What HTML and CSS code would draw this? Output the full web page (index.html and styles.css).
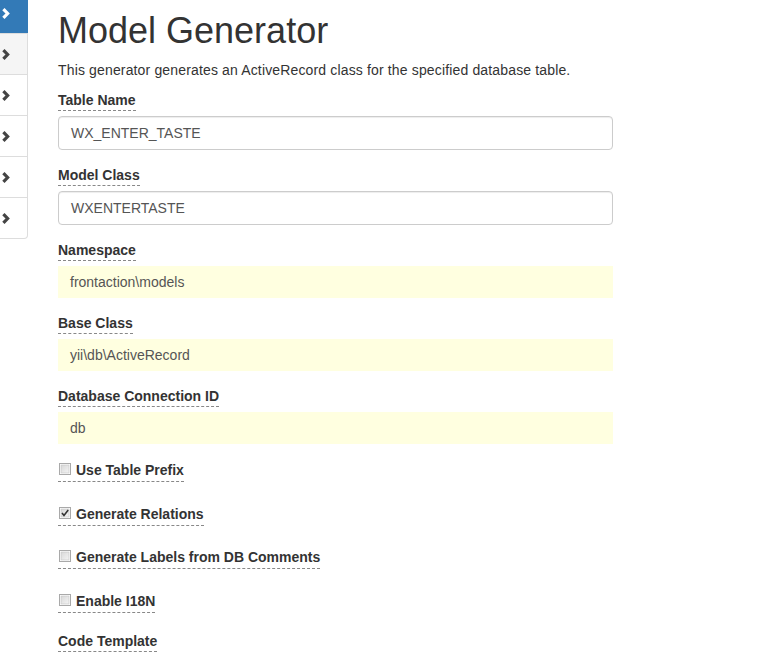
FILE: index.html
```html
<!DOCTYPE html>
<html>
<head>
<meta charset="utf-8">
<link rel="stylesheet" href="styles.css">
</head>
<body>
<div class="page">
  <nav class="sidebar">
    <div class="item active"><svg class="chev" width="9" height="11" viewBox="0 0 9 11"><path d="M1.4 1.2 L5.6 5.5 L1.4 9.8" /></svg></div>
    <div class="item hover"><svg class="chev" width="9" height="11" viewBox="0 0 9 11"><path d="M1.4 1.2 L5.6 5.5 L1.4 9.8" /></svg></div>
    <div class="item"><svg class="chev" width="9" height="11" viewBox="0 0 9 11"><path d="M1.4 1.2 L5.6 5.5 L1.4 9.8" /></svg></div>
    <div class="item"><svg class="chev" width="9" height="11" viewBox="0 0 9 11"><path d="M1.4 1.2 L5.6 5.5 L1.4 9.8" /></svg></div>
    <div class="item"><svg class="chev" width="9" height="11" viewBox="0 0 9 11"><path d="M1.4 1.2 L5.6 5.5 L1.4 9.8" /></svg></div>
    <div class="item last"><svg class="chev" width="9" height="11" viewBox="0 0 9 11"><path d="M1.4 1.2 L5.6 5.5 L1.4 9.8" /></svg></div>
  </nav>
  <main class="main">
    <h1 class="title">Model Generator</h1>
    <p class="desc">This generator generates an ActiveRecord class for the specified database table.</p>

    <div class="group">
      <label class="lbl">Table Name</label>
      <div class="input">WX_ENTER_TASTE</div>
    </div>
    <div class="group">
      <label class="lbl">Model Class</label>
      <div class="input">WXENTERTASTE</div>
    </div>
    <div class="group">
      <label class="lbl">Namespace</label>
      <div class="sticky">frontaction\models</div>
    </div>
    <div class="group">
      <label class="lbl">Base Class</label>
      <div class="sticky">yii\db\ActiveRecord</div>
    </div>
    <div class="group">
      <label class="lbl">Database Connection ID</label>
      <div class="sticky">db</div>
    </div>

    <div class="check-row">
      <label class="check-lbl"><svg class="cb" width="12" height="12" viewBox="0 0 12 12"><defs><linearGradient id="g1" x1="0" y1="0" x2="1" y2="1"><stop offset="0" stop-color="#d8d8d8"/><stop offset="1" stop-color="#f4f4f4"/></linearGradient></defs><rect x="0.5" y="0.5" width="11" height="11" fill="#fff" stroke="#a9a9a9"/><rect x="2" y="2" width="8" height="8" fill="url(#g1)" stroke="#c4c4c4" stroke-width="0.6"/></svg>Use Table Prefix</label>
    </div>
    <div class="check-row">
      <label class="check-lbl"><svg class="cb" width="12" height="12" viewBox="0 0 12 12"><rect x="0.5" y="0.5" width="11" height="11" fill="#fff" stroke="#a9a9a9"/><rect x="2" y="2" width="8" height="8" fill="url(#g1)" stroke="#c4c4c4" stroke-width="0.6"/><path d="M3 6 L5 8.5 L9.2 3" fill="none" stroke="#333" stroke-width="1.6"/></svg>Generate Relations</label>
    </div>
    <div class="check-row">
      <label class="check-lbl"><svg class="cb" width="12" height="12" viewBox="0 0 12 12"><rect x="0.5" y="0.5" width="11" height="11" fill="#fff" stroke="#a9a9a9"/><rect x="2" y="2" width="8" height="8" fill="url(#g1)" stroke="#c4c4c4" stroke-width="0.6"/></svg>Generate Labels from DB Comments</label>
    </div>
    <div class="check-row">
      <label class="check-lbl"><svg class="cb" width="12" height="12" viewBox="0 0 12 12"><rect x="0.5" y="0.5" width="11" height="11" fill="#fff" stroke="#a9a9a9"/><rect x="2" y="2" width="8" height="8" fill="url(#g1)" stroke="#c4c4c4" stroke-width="0.6"/></svg>Enable I18N</label>
    </div>

    <div class="group last-group">
      <label class="lbl">Code Template</label>
    </div>
  </main>
</div>
</body>
</html>
```
FILE: styles.css
```css
html, body {
  margin: 0;
  padding: 0;
  background: #fff;
}
body {
  font-family: "Liberation Sans", Arial, sans-serif;
  font-size: 14px;
  line-height: 20px;
  color: #333;
  overflow: hidden;
}
.page {
  display: flex;
  align-items: flex-start;
  height: 656px;
  overflow: hidden;
}
.sidebar {
  width: 28px;
  flex: none;
  margin-top: -8px;
  display: flex;
  flex-direction: column;
}
.item {
  box-sizing: border-box;
  height: 41px;
  border-top: 1px solid #ddd;
  border-right: 1px solid #ddd;
  background: #fff;
  display: flex;
  align-items: center;
  padding-left: 2px;
  padding-top: 0;
}
.item.active {
  background: #337ab7;
  border-color: #337ab7;
}
.item.hover {
  background: #f5f5f5;
}
.item.last {
  height: 42px;
  border-bottom: 1px solid #ddd;
  border-bottom-right-radius: 4px;
}
.chev path {
  fill: none;
  stroke: #444;
  stroke-width: 3.2;
  stroke-linejoin: miter;
}
.item.active .chev path {
  stroke: #fff;
}
.main {
  margin-left: 30px;
  width: 555px;
  flex: none;
}
.title {
  font-size: 36px;
  font-weight: normal;
  line-height: 39px;
  margin: 11px 0 10px;
  color: #333;
}
.desc {
  margin: 0 0 10px;
  letter-spacing: 0.15px;
}
.group {
  margin-bottom: 15px;
}
.lbl {
  display: inline-block;
  font-weight: bold;
  border-bottom: 1px dashed #888;
  margin-bottom: 5px;
  line-height: 20px;
}
.input {
  box-sizing: border-box;
  height: 34px;
  padding: 6px 12px;
  border: 1px solid #ccc;
  border-radius: 4px;
  box-shadow: inset 0 1px 1px rgba(0,0,0,.075);
  color: #555;
}
.sticky {
  padding: 6px 12px;
  background: #ffffe0;
  color: #555;
}
.check-row {
  margin-bottom: 20.7px;
}
.check-lbl {
  display: inline-flex;
  align-items: flex-start;
  height: 22px;
  line-height: 22px;
  font-weight: bold;
  border-bottom: 1px dashed #888;
}
.cb {
  flex: none;
  margin-top: 4px;
  margin-right: 5px;
  margin-left: 1px;
}
.last-group {
  margin-top: -3px;
}
```
